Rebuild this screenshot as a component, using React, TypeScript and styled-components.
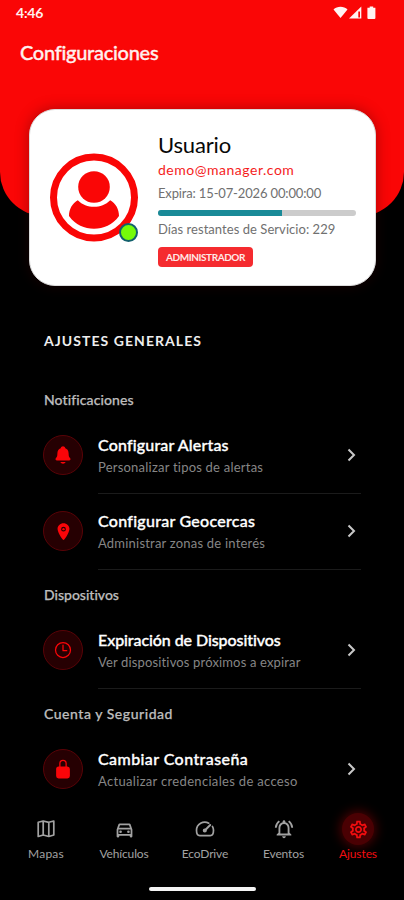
import React from 'react';
import styled, { createGlobalStyle } from 'styled-components';
import { IoNotifications, IoLocation, IoTimeOutline, IoLockClosed } from 'react-icons/io5';
import { MdOutlineDirectionsCar, MdOutlineNotificationsActive, MdOutlineSettings } from 'react-icons/md';

const GlobalStyle = createGlobalStyle`
  * { box-sizing: border-box; }
  body { margin: 0; background: #000; font-family: Lato, "Liberation Sans", sans-serif; font-variant-ligatures: none; }
`;

const Screen = styled.div`
  width: 404px;
  height: 900px;
  display: flex;
  flex-direction: column;
  overflow: hidden;
  background: #000;
  color: #fff;
`;

const Text = styled.span<{ $spacing?: number }>`
  display: block;
  white-space: nowrap;
  letter-spacing: ${(p) => p.$spacing ?? 0}px;
`;

const Header = styled.header`
  height: 216px;
  flex: none;
  background: #fa0606;
  border-radius: 0 0 44px 44px;
`;

const StatusBar = styled.div`
  height: 25px;
  padding: 0 27px 0 16px;
  display: flex;
  align-items: center;
  justify-content: space-between;
  font-size: 14px;
  font-weight: 700;
  color: #fff0ee;
`;

const Title = styled(Text)`
  margin: 14px 0 0 20px;
  font-size: 20px;
  line-height: 26px;
  font-weight: 500;
  -webkit-text-stroke: 0.35px #fff0ee;
  color: #fff0ee;
`;

const Card = styled.section`
  width: 347px;
  height: 177px;
  flex: none;
  margin: -107px 0 0 29px;
  padding: 22px 20px 0 20px;
  display: flex;
  gap: 19px;
  background: #fff;
  border: 1px solid #dcdcdc;
  border-radius: 26px;
  box-shadow: 0 0 14px rgba(60, 0, 0, 0.38);
`;

const Avatar = styled.div`
  width: 89px;
  height: 89px;
  margin-top: 21px;
  position: relative;
  flex: none;
`;

const OnlineDot = styled.i`
  position: absolute;
  right: 1px;
  bottom: 0;
  width: 19px;
  height: 19px;
  border-radius: 50%;
  background: #76fb08;
  border: 2px solid #12606c;
`;

const Details = styled.div`
  display: flex;
  flex-direction: column;
  align-items: flex-start;
`;

const UserName = styled(Text)`
  font-size: 22px;
  line-height: 26px;
  color: #080808;
`;

const Email = styled(Text)`
  font-size: 14px;
  line-height: 18px;
  margin-top: 3px;
  color: #f51d1d;
`;

const Meta = styled(Text)`
  font-size: 13px;
  line-height: 18px;
  color: #707070;
`;

const Expiry = styled(Meta)`
  margin-top: 5px;
`;

const Track = styled.div`
  width: 198px;
  height: 6px;
  margin: 8px 0 4px;
  border-radius: 3px;
  overflow: hidden;
  background: #ccc;
`;

const Progress = styled.div`
  width: 124px;
  height: 100%;
  background: #198a98;
`;

const Badge = styled.div`
  width: 95px;
  height: 20px;
  margin-top: 9px;
  border-radius: 4px;
  display: flex;
  align-items: center;
  justify-content: center;
  background: #f52b2f;
  color: #ffe9e7;
  font-size: 10px;
  font-weight: 700;
`;

const Settings = styled.main`
  height: 514px;
  flex: none;
  overflow: hidden;
  padding: 45px 43px 0 44px;
`;

const Heading = styled(Text)`
  font-size: 14px;
  line-height: 20px;
  font-weight: 700;
  color: #eee;
`;

const Group = styled.section`
  display: flex;
  flex-direction: column;
`;

const GroupTitle = styled(Text)<{ $first?: boolean }>`
  margin-top: ${(p) => (p.$first ? 39 : 15)}px;
  margin-bottom: 8px;
  font-size: 14px;
  line-height: 20px;
  font-weight: 500;
  color: #bdbdbd;
  -webkit-text-stroke: 0.25px #bdbdbd;
`;

const Row = styled.div`
  height: 76px;
  display: flex;
  align-items: center;
  gap: 15px;
`;

const IconCircle = styled.div`
  width: 40px;
  height: 40px;
  flex: none;
  margin: 0 0 2px -1px;
  display: flex;
  align-items: center;
  justify-content: center;
  border-radius: 50%;
  border: 1px solid #590307;
  background: #260002;
  color: #fb0509;
`;

const RowBody = styled.div`
  flex: 1;
  height: 76px;
  display: flex;
  align-items: center;
  justify-content: space-between;
  border-bottom: 1px solid #1b1b1b;
`;

const RowTitle = styled(Text)`
  font-size: 16px;
  line-height: 22px;
  font-weight: 500;
  color: #fff;
  -webkit-text-stroke: 0.35px #fff;
`;

const RowNote = styled(Text)`
  margin-top: 1px;
  font-size: 13px;
  line-height: 20px;
  color: #868686;
`;

const ChevronBox = styled.svg`
  width: 9px;
  height: 14px;
  margin: 0 5px 1px 0;
  fill: none;
  stroke: #c8c8c8;
  stroke-width: 2;
`;

const NavBar = styled.nav`
  height: 100px;
  flex: none;
  padding: 10px 0 0 7px;
  background: #000;
`;

const NavItems = styled.div`
  height: 78px;
  display: grid;
  grid-template-columns: 78px 78px 84px 73px 76px;
`;

const NavItem = styled.div<{ $active?: boolean }>`
  display: flex;
  flex-direction: column;
  align-items: center;
  color: ${(p) => (p.$active ? '#f20d10' : '#a2a2a2')};
  font-size: 12px;
  line-height: 16px;
`;

const NavIcon = styled.div<{ $active?: boolean }>`
  width: 32px;
  height: 32px;
  margin: 3px 0 1px;
  display: flex;
  align-items: center;
  justify-content: center;
  border-radius: 50%;
  background: ${(p) => (p.$active ? '#4a0003' : 'none')};
  box-shadow: ${(p) => (p.$active ? '0 0 11px 2px #4a0003' : 'none')};
`;

const HomeBar = styled.div`
  width: 107px;
  height: 4px;
  margin: -1px 0 0 142px;
  border-radius: 2px;
  background: #f4f4f4;
`;

const StatusIcons = () => (
  <svg width="45" height="16" viewBox="0 0 45 16" fill="#fff3f1">
    <path d="M1.5 4.4C5 0.8 12 0.8 15.5 4.4L8.5 13z" />
    <path d="M17 13.5 29.3 1.5V13.5z" />
    <path d="M26.3 6.5h1.7v6h-1.7z" fill="#fa0606" />
    <path d="M37.7 1.5h3.5v1.3h2.2v10.3q0 1-1 1h-6q-1 0-1-1V2.8h2.3z" />
  </svg>
);

const AvatarDrawing = () => (
  <svg width="89" height="89" viewBox="0 0 89 89" fill="#fa0606">
    <circle cx="44" cy="44.5" r="40.5" fill="none" stroke="#fa0606" strokeWidth="7" />
    <circle cx="44" cy="34" r="15.8" />
    <path d="M27.8 47.2C36.5 56 51.5 56 60.2 47.2C65.5 50 69 56 69 63C62.5 72 53.5 75.8 44 75.8S25.5 72 19 63C19 56 22.5 50 27.8 47.2Z" />
  </svg>
);

const MapIcon = () => (
  <svg width="20" height="20" viewBox="0 0 20 20" fill="none" stroke="currentColor" strokeWidth="1.7" strokeLinejoin="round">
    <path d="M2.2 3.3 7.2 2 12.8 3.3 17.8 2V16L12.8 17.5 7.2 16 2.2 17.5ZM7.2 2V16M12.8 3.3V17.5" />
  </svg>
);

const GaugeIcon = () => (
  <svg width="20" height="20" viewBox="0 0 20 20" fill="none" stroke="currentColor" strokeWidth="1.7" strokeLinecap="round" strokeLinejoin="round">
    <path d="M13.8 4.2C8.3 1.2 1.5 5 1.5 11.3Q1.5 16.7 4.8 16.7H15.2Q18.5 16.7 18.5 11.3Q18.5 9.2 17.4 7.4" />
    <path d="M9.8 11.5 15.2 6" strokeWidth="2" />
    <circle cx="9.8" cy="11.5" r="1.2" />
  </svg>
);

const Chevron = () => (
  <ChevronBox viewBox="0 0 9 14"><path d="M1.5 1.5 7 7 1.5 12.5" /></ChevronBox>
);

type Label = { text: string; spacing: number };
type Item = { icon: React.ReactNode; title: Label; note: Label };

const groups: { title: Label; items: Item[] }[] = [
  {
    title: { text: 'Notificaciones', spacing: 0.1 },
    items: [
      { icon: <IoNotifications size={20} />, title: { text: 'Configurar Alertas', spacing: 0.16 }, note: { text: 'Personalizar tipos de alertas', spacing: 0.22 } },
      { icon: <IoLocation size={19} />, title: { text: 'Configurar Geocercas', spacing: 0.27 }, note: { text: 'Administrar zonas de interés', spacing: 0.21 } },
    ],
  },
  {
    title: { text: 'Dispositivos', spacing: 0 },
    items: [
      { icon: <IoTimeOutline size={20} />, title: { text: 'Expiración de Dispositivos', spacing: -0.08 }, note: { text: 'Ver dispositivos próximos a expirar', spacing: 0.15 } },
    ],
  },
  {
    title: { text: 'Cuenta y Seguridad', spacing: 0.54 },
    items: [
      { icon: <IoLockClosed size={20} />, title: { text: 'Cambiar Contraseña', spacing: 0.42 }, note: { text: 'Actualizar credenciales de acceso', spacing: 0.32 } },
    ],
  },
];

const tabs: { icon: React.ReactNode; label: Label; active?: boolean }[] = [
  { icon: <MapIcon />, label: { text: 'Mapas', spacing: 0.2 } },
  { icon: <MdOutlineDirectionsCar size={21} />, label: { text: 'Vehículos', spacing: -0.15 } },
  { icon: <GaugeIcon />, label: { text: 'EcoDrive', spacing: -0.15 } },
  { icon: <MdOutlineNotificationsActive size={22} />, label: { text: 'Eventos', spacing: -0.13 } },
  { icon: <MdOutlineSettings size={21} />, label: { text: 'Ajustes', spacing: -0.1 }, active: true },
];

export default function App() {
  return (
    <Screen>
      <GlobalStyle />
      <Header>
        <StatusBar>
          <Text $spacing={-0.2}>4:46</Text>
          <StatusIcons />
        </StatusBar>
        <Title $spacing={-0.28}>Configuraciones</Title>
      </Header>
      <Card>
        <Avatar>
          <AvatarDrawing />
          <OnlineDot />
        </Avatar>
        <Details>
          <UserName $spacing={-0.16}>Usuario</UserName>
          <Email $spacing={0.52}>demo@manager.com</Email>
          <Expiry $spacing={-0.15}>Expira: 15-07-2026 00:00:00</Expiry>
          <Track><Progress /></Track>
          <Meta $spacing={0.05}>Días restantes de Servicio: 229</Meta>
          <Badge><Text $spacing={-0.43}>ADMINISTRADOR</Text></Badge>
        </Details>
      </Card>
      <Settings>
        <Heading $spacing={1.05}>AJUSTES GENERALES</Heading>
        {groups.map((group, index) => (
          <Group key={group.title.text}>
            <GroupTitle $first={index === 0} $spacing={group.title.spacing}>{group.title.text}</GroupTitle>
            {group.items.map((item) => (
              <Row key={item.title.text}>
                <IconCircle>{item.icon}</IconCircle>
                <RowBody>
                  <div>
                    <RowTitle $spacing={item.title.spacing}>{item.title.text}</RowTitle>
                    <RowNote $spacing={item.note.spacing}>{item.note.text}</RowNote>
                  </div>
                  <Chevron />
                </RowBody>
              </Row>
            ))}
          </Group>
        ))}
      </Settings>
      <NavBar>
        <NavItems>
          {tabs.map((tab) => (
            <NavItem key={tab.label.text} $active={tab.active}>
              <NavIcon $active={tab.active}>{tab.icon}</NavIcon>
              <Text $spacing={tab.label.spacing}>{tab.label.text}</Text>
            </NavItem>
          ))}
        </NavItems>
        <HomeBar />
      </NavBar>
    </Screen>
  );
}
